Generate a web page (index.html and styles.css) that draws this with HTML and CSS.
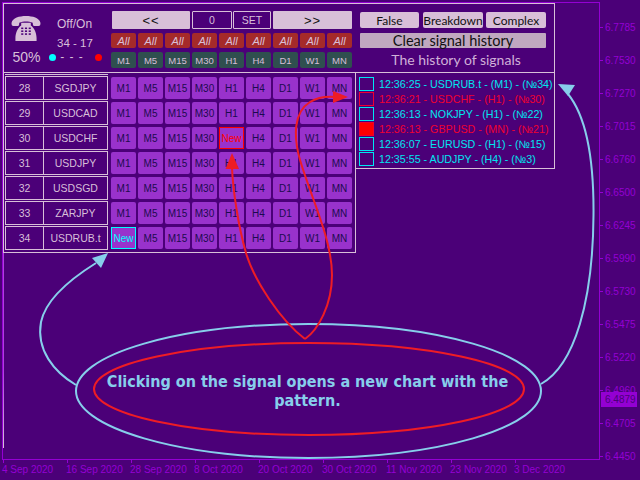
FILE: index.html
```html
<!DOCTYPE html>
<html lang="en">
<head>
<meta charset="utf-8">
<title>Signal panel</title>
<link rel="stylesheet" href="styles.css">
</head>
<body>
<div class="app">
  <main class="plot">
    <div class="panel">
      <section class="board">
        <header class="board-head">
          <div class="status">
            <svg class="phone" viewBox="0 0 32 26" aria-hidden="true">
              <path class="ph" d="M1 7C2 2 9 0 16 0s14 2 15 7c.3 2-.5 3.500-2 3.500h-4c-1.500 0-2-1-2-3.500-2-1-5-1.300-7-1.300S11 6 9 7c0 2.500-.5 3.500-2 3.500H3C1.500 10.500.7 9 1 7Z"/>
              <path class="ph" d="M11 7h10v3c3 2 6 7 6 13v3H5v-3c0-6 3-11 6-13Z"/>
              <g class="keys">
                <rect x="11" y="12" width="2.200" height="1.600"/><rect x="14.900" y="12" width="2.200" height="1.600"/><rect x="18.800" y="12" width="2.200" height="1.600"/>
                <rect x="11" y="15" width="2.200" height="1.600"/><rect x="14.900" y="15" width="2.200" height="1.600"/><rect x="18.800" y="15" width="2.200" height="1.600"/>
                <rect x="11" y="18" width="2.200" height="1.600"/><rect x="14.900" y="18" width="2.200" height="1.600"/><rect x="18.800" y="18" width="2.200" height="1.600"/>
              </g>
            </svg>
            <span class="off-on">Off/On</span>
            <span class="count">34 - 17</span>
            <span class="pct">50%</span>
            <span class="dot dot-cyan"></span>
            <span class="dashes">- - -</span>
            <span class="dot dot-red"></span>
          </div>
          <div class="controls">
            <div class="nav-row">
              <button class="btn nav">&lt;&lt;</button>
              <span class="box box-num">0</span>
              <span class="box box-set">SET</span>
              <button class="btn nav nav-next">&gt;&gt;</button>
            </div>
            <div class="tf-row">
              <span class="all">All</span><span class="all">All</span><span class="all">All</span><span class="all">All</span><span class="all">All</span><span class="all">All</span><span class="all">All</span><span class="all">All</span><span class="all">All</span>
            </div>
            <div class="tf-row">
              <span class="tf">M1</span><span class="tf">M5</span><span class="tf">M15</span><span class="tf">M30</span><span class="tf">H1</span><span class="tf">H4</span><span class="tf">D1</span><span class="tf">W1</span><span class="tf">MN</span>
            </div>
          </div>
        </header>
        <div class="rows">
          <div class="clipped"></div>
          <div class="row"><span class="idx">28</span><span class="sym">SGDJPY</span><span class="c">M1</span><span class="c">M5</span><span class="c">M15</span><span class="c">M30</span><span class="c">H1</span><span class="c">H4</span><span class="c">D1</span><span class="c">W1</span><span class="c">MN</span></div>
          <div class="row"><span class="idx">29</span><span class="sym">USDCAD</span><span class="c">M1</span><span class="c">M5</span><span class="c">M15</span><span class="c">M30</span><span class="c">H1</span><span class="c">H4</span><span class="c">D1</span><span class="c">W1</span><span class="c">MN</span></div>
          <div class="row"><span class="idx">30</span><span class="sym">USDCHF</span><span class="c">M1</span><span class="c">M5</span><span class="c">M15</span><span class="c">M30</span><span class="c c-red">New</span><span class="c">H4</span><span class="c">D1</span><span class="c">W1</span><span class="c">MN</span></div>
          <div class="row"><span class="idx">31</span><span class="sym">USDJPY</span><span class="c">M1</span><span class="c">M5</span><span class="c">M15</span><span class="c">M30</span><span class="c">H1</span><span class="c">H4</span><span class="c">D1</span><span class="c">W1</span><span class="c">MN</span></div>
          <div class="row"><span class="idx">32</span><span class="sym">USDSGD</span><span class="c">M1</span><span class="c">M5</span><span class="c">M15</span><span class="c">M30</span><span class="c">H1</span><span class="c">H4</span><span class="c">D1</span><span class="c">W1</span><span class="c">MN</span></div>
          <div class="row"><span class="idx">33</span><span class="sym">ZARJPY</span><span class="c">M1</span><span class="c">M5</span><span class="c">M15</span><span class="c">M30</span><span class="c">H1</span><span class="c">H4</span><span class="c">D1</span><span class="c">W1</span><span class="c">MN</span></div>
          <div class="row"><span class="idx">34</span><span class="sym">USDRUB.t</span><span class="c c-cyan">New</span><span class="c">M5</span><span class="c">M15</span><span class="c">M30</span><span class="c">H1</span><span class="c">H4</span><span class="c">D1</span><span class="c">W1</span><span class="c">MN</span></div>
        </div>
      </section>
      <aside class="history">
        <div class="hist-head">
          <div class="filters">
            <button class="btn fbtn">False</button>
            <button class="btn fbtn">Breakdown</button>
            <button class="btn fbtn">Complex</button>
          </div>
          <button class="btn clear">Clear signal history</button>
          <div class="hist-title">The history of signals</div>
        </div>
        <ul class="hist-list">
          <li class="sig sig-c"><span class="sq"></span>12:36:25 - USDRUB.t - (M1) - (№34)</li>
          <li class="sig sig-r"><span class="sq"></span>12:36:21 - USDCHF - (H1) - (№30)</li>
          <li class="sig sig-c"><span class="sq"></span>12:36:13 - NOKJPY - (H1) - (№22)</li>
          <li class="sig sig-r"><span class="sq sq-fill"></span>12:36:13 - GBPUSD - (MN) - (№21)</li>
          <li class="sig sig-c"><span class="sq"></span>12:36:07 - EURUSD - (H1) - (№15)</li>
          <li class="sig sig-c"><span class="sq"></span>12:35:55 - AUDJPY - (H4) - (№3)</li>
        </ul>
      </aside>
    </div>
  </main>
  <div class="axis-y">
    <span>6.7785</span><span>6.7530</span><span>6.7270</span><span>6.7015</span><span>6.6760</span><span>6.6500</span><span>6.6245</span><span>6.5990</span><span>6.5730</span><span>6.5475</span><span>6.5220</span><span>6.4960</span><span>6.4705</span><span>6.4450</span>
  </div>
  <div class="axis-x">
    <span>4 Sep 2020</span><span>16 Sep 2020</span><span>28 Sep 2020</span><span>8 Oct 2020</span><span>20 Oct 2020</span><span>30 Oct 2020</span><span>11 Nov 2020</span><span>23 Nov 2020</span><span>3 Dec 2020</span>
  </div>
  <div class="price-tag">6.4879</div>
  <div class="edge-line"></div>
  <svg class="notes" viewBox="0 0 640 480" aria-hidden="true">
    <g class="blue">
      <ellipse cx="308.500" cy="391" rx="232.500" ry="67"/>
      <path d="M76 385C54 372 36 350 41 322C46 298 72 278 96 263"/>
      <path d="M541 384C575 365 593 300 593.500 215C594 155 585 115 568 94"/>
    </g>
    <polygon class="blue-fill" points="108,253 92,258 101,268"/>
    <polygon class="blue-fill" points="558,84 575,85 568,96"/>
    <g class="red">
      <ellipse cx="309" cy="389" rx="215" ry="46"/>
      <path d="M305 339C280 320 254 280 246 253C238 225 233 190 232 168"/>
      <path d="M305 339C318 330 332 305 332 275C332 240 312 200 300 160C293 135 294 112 310 102C318 97 326 96 336 97"/>
    </g>
    <polygon class="red-fill" points="232,153 225.500,169 239,169"/>
    <polygon class="red-fill" points="348,97 333,91 333,103"/>
  </svg>
  <p class="callout">Clicking on the signal opens a new chart with the pattern.</p>
</div>
</body>
</html>
```

FILE: styles.css
```css
* { box-sizing: border-box; }
html, body { margin: 0; padding: 0; }
body {
  width: 640px;
  height: 480px;
  overflow: hidden;
  background: #4b0078;
  font-family: "Liberation Sans", Arial, sans-serif;
  color: #d8bfd8;
}
.app {
  position: relative;
  width: 640px;
  height: 480px;
  display: grid;
  grid-template-columns: 600px 40px;
  grid-template-rows: 460px 20px;
  padding: 0;
  background: #4b0078;
}
.plot {
  margin: 2px 0 0 2px;
  border: 1px solid #9400d3;
  min-width: 0;
}
.panel {
  display: flex;
  align-items: flex-start;
  width: 552px;
  margin: 0;
}

/* Left board */
.board {
  width: 353px;
  height: 250px;
  border-top: 1px solid #d8bfd8;
  border-left: 1px solid #d8bfd8;
  border-bottom: 1px solid #d8bfd8;
}
.board-head {
  display: flex;
  height: 69px;
  border-bottom: 1px solid #d8bfd8;
}
.status {
  width: 107px;
  height: 68px;
  display: grid;
  grid-template-columns: 44px 8px 32px 17px;
  grid-template-rows: 25px 18px 18px;
  padding-top: 6px;
  justify-items: center;
  align-items: center;
  font-size: 12px;
}
.phone {
  grid-row: 1 / 3;
  grid-column: 1;
  width: 32px;
  height: 25px;
  margin-bottom: 7px;
}
.ph { fill: #d8bfd8; }
.keys rect { fill: #4b0078; }
.off-on { grid-column: 2 / 5; grid-row: 1; justify-self: start; padding: 2px 0 0 9px; }
.count { grid-column: 2 / 5; grid-row: 2; justify-self: start; padding: 0 0 2px 9px; font-size: 11.500px; }
.pct { grid-column: 1; grid-row: 3; font-size: 14px; padding: 0 0 10px 0; margin-left: 1px; }
.dot { width: 7px; height: 7px; border-radius: 50%; grid-row: 3; margin-bottom: 10px; }
.dot-cyan { grid-column: 2; background: #00ffff; }
.dot-red { grid-column: 4; background: #ff0000; justify-self: start; margin-left: 7px; }
.dashes { grid-column: 3; grid-row: 3; padding-bottom: 11px; letter-spacing: 1px; }

.controls {
  display: flex;
  flex-direction: column;
  gap: 4px;
  padding-top: 7px;
}
.nav-row { display: flex; height: 18px; margin-left: 1px; }
.btn {
  border: 0;
  padding: 0;
  margin: 0;
  background: #d8bfd8;
  color: #111;
  border-radius: 1px;
  font-family: "Liberation Sans", Arial, sans-serif;
}
.nav { width: 78px; font-size: 13px; letter-spacing: 1px; }
.nav-next { width: 79px; margin-left: 2px; }
.box {
  display: flex;
  align-items: center;
  justify-content: center;
  border: 1px solid #d8bfd8;
  border-radius: 1px;
  font-size: 10.500px;
}
.box-num { width: 40px; margin-left: 2px; }
.box-set { width: 38px; margin-left: 1px; }
.tf-row { display: flex; gap: 2px; }
.all, .tf {
  width: 25px;
  display: flex;
  align-items: center;
  justify-content: center;
  border-radius: 2px;
}
.all { height: 15px; background: #a52a2a; font-style: italic; font-size: 11px; }
.tf { height: 16px; background: #2f4f4f; font-size: 9.500px; }

/* Rows */
.rows {
  position: relative;
  width: 352px;
  height: 179px;
  border-right: 1px solid #d8bfd8;
  padding-top: 3px;
  display: flex;
  flex-direction: column;
  gap: 1px;
}
.clipped {
  position: absolute;
  left: 1px;
  top: 0;
  width: 103px;
  height: 2px;
  border-bottom: 1px solid #d8bfd8;
}
.row {
  display: flex;
  align-items: center;
  height: 24px;
  padding-left: 1px;
}
.idx, .sym {
  display: flex;
  align-items: center;
  justify-content: center;
  height: 24px;
  border: 1px solid #d8bfd8;
  font-size: 10.500px;
}
.idx { width: 39px; }
.sym { width: 64px; border-left: 0; margin-right: 3px; }
.c {
  display: flex;
  align-items: center;
  justify-content: center;
  width: 25px;
  height: 22px;
  margin-right: 2px;
  background: #9932cc;
  border-radius: 2px;
  color: #1c0a50;
  font-size: 10px;
}
.c-cyan { border: 1px solid #00ffff; color: #00ffff; border-radius: 0; }
.c-red { border: 1px solid #ff0000; color: #ff0000; border-radius: 0; }

/* History */
.history {
  width: 199px;
  height: 166px;
  border-top: 1px solid #d8bfd8;
  border-right: 1px solid #d8bfd8;
  border-bottom: 1px solid #d8bfd8;
}
.hist-head {
  height: 69px;
  border-bottom: 1px solid #d8bfd8;
  padding: 8px 0 0 4px;
}
.filters { display: flex; height: 16px; }
.fbtn {
  width: 59px;
  margin-right: 4px;
  font-family: "Lato", sans-serif;
  font-size: 12px;
  border-radius: 2px;
}
.fbtn:nth-child(2) { width: 60px; margin-right: 3px; }
.fbtn:nth-child(3) { width: 60px; }
.clear {
  display: block;
  width: 186px;
  height: 15px;
  margin-top: 5px;
  background: #c0a8c0;
  font-family: "Lato", sans-serif;
  font-size: 14.500px;
  line-height: 15px;
}
.hist-title {
  width: 192px;
  margin-top: 3px;
  text-align: center;
  font-family: "Lato", sans-serif;
  font-size: 14px;
  line-height: 17px;
  color: #d0b0d8;
}
.hist-list {
  list-style: none;
  margin: 0;
  padding: 3px 0 0 3px;
}
.sig {
  display: flex;
  align-items: center;
  height: 15px;
  font-size: 10.700px;
  white-space: nowrap;
}
.sq {
  width: 15px;
  height: 14px;
  border: 1px solid currentColor;
  margin-right: 5px;
  flex: none;
}
.sq-fill { background: #ff0000; }
.sig-c { color: #00e6f0; }
.sig-r { color: #f00030; }

/* Axes */
.axis-y {
  grid-column: 2;
  grid-row: 1 / 3;
  padding-top: 11px;
  color: #9400d3;
  font-size: 10px;
}
.axis-y span {
  position: relative;
  display: block;
  height: 33px;
  line-height: 33px;
  padding-left: 5px;
}
.axis-y span::before {
  content: "";
  position: absolute;
  left: 0;
  top: 16px;
  width: 3px;
  height: 1px;
  background: #9400d3;
}
.axis-x {
  grid-column: 1;
  grid-row: 2;
  display: flex;
  padding-left: 2px;
  color: #9400d3;
  font-size: 10px;
}
.axis-x span {
  position: relative;
  flex: none;
  width: 64px;
  padding-top: 3px;
  line-height: 13px;
  white-space: nowrap;
}
.axis-x span::before {
  content: "";
  position: absolute;
  left: 1px;
  top: 0;
  width: 1px;
  height: 3px;
  background: #9400d3;
}

/* Overlays */
.price-tag {
  position: absolute;
  left: 601px;
  top: 392px;
  width: 36px;
  height: 15px;
  padding-left: 4px;
  background: #9400d3;
  color: #4b0078;
  font-size: 10px;
  line-height: 16px;
}
.edge-line {
  position: absolute;
  left: 3px;
  top: 253px;
  width: 1px;
  height: 195px;
  background: linear-gradient(#b040e0 60%, #d8bfd8);
}
.notes {
  position: absolute;
  left: 0;
  top: 0;
  width: 640px;
  height: 480px;
  pointer-events: none;
}
.blue, .red { fill: none; stroke-width: 2; }
.blue { stroke: #87ceeb; }
.red { stroke: #ee1c25; }
.blue-fill { fill: #87ceeb; }
.red-fill { fill: #ee1c25; }
.callout {
  position: absolute;
  left: 100px;
  top: 372px;
  width: 415px;
  margin: 0;
  text-align: center;
  color: #87ceeb;
  font-family: "DejaVu Sans", sans-serif;
  font-stretch: condensed;
  font-weight: bold;
  font-size: 16px;
  line-height: 19px;
}
```
